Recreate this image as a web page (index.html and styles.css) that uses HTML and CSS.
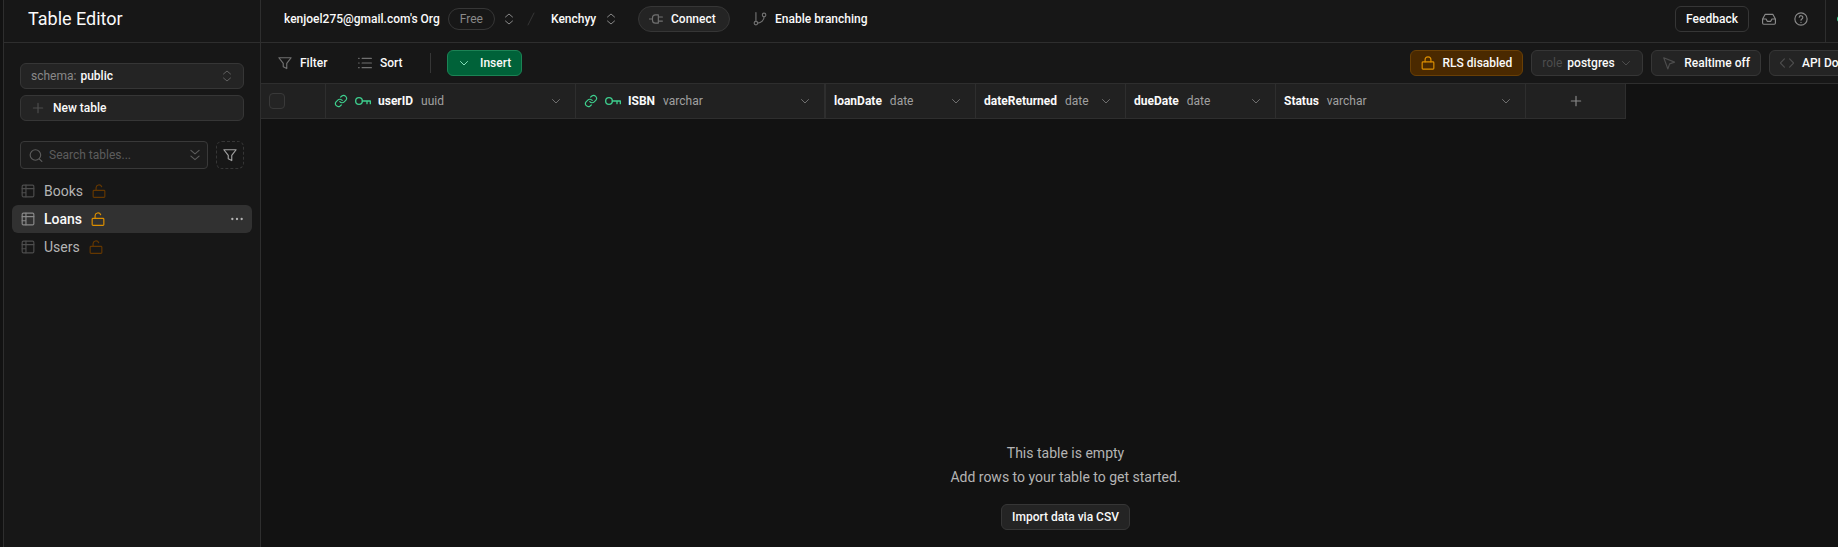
FILE: index.html
```html
<!DOCTYPE html>
<html lang="en">
<head>
<meta charset="utf-8">
<title>Table Editor</title>
<link rel="stylesheet" href="styles.css">
</head>
<body>
<svg class="sprite" aria-hidden="true">
  <symbol id="updown" viewBox="0 0 24 24"><path d="m5 16 7 6 7-6M5 8l7-6 7 6"/></symbol>
  <symbol id="down" viewBox="0 0 24 24"><path d="m5 9 7 7 7-7"/></symbol>
  <symbol id="plus" viewBox="0 0 24 24"><path d="M4 12h16M12 4v16"/></symbol>
  <symbol id="search" viewBox="0 0 24 24"><circle cx="11" cy="12" r="9"/><path d="m18 19 4 4"/></symbol>
  <symbol id="double-down" viewBox="0 0 24 24"><path d="m5 4 7 6 7-6M5 14l7 6 7-6"/></symbol>
  <symbol id="funnel" viewBox="0 0 24 24"><path d="M1.500 3h21l-7.500 9.500v9l-6-3v-6z"/></symbol>
  <symbol id="table" viewBox="0 0 24 24"><rect x="2" y="2" width="20" height="20" rx="2"/><path d="M2 8h20M8.500 2v20M2 15h6"/></symbol>
  <symbol id="unlock" viewBox="0 0 24 24"><rect x="2" y="11" width="20" height="12" rx="1.500"/><path d="M7 11V6.500a5 5 0 0 1 9.500-2"/></symbol>
  <symbol id="lock" viewBox="0 0 24 24"><rect x="2" y="10" width="20" height="12.500" rx="1.500"/><path d="M7 10V6.500a5 5 0 0 1 10 0V10"/></symbol>
  <symbol id="dots" viewBox="0 0 24 24"><circle cx="4" cy="12" r="1"/><circle cx="12" cy="12" r="1"/><circle cx="20" cy="12" r="1"/></symbol>
  <symbol id="plug" viewBox="0 0 24 24"><path d="M0.500 12H6M16 5h-5a5 5 0 0 0-5 5v4a5 5 0 0 0 5 5h5zM16 8.500h7M16 15.500h7"/></symbol>
  <symbol id="branch" viewBox="0 0 24 24"><path d="M5 1v15M8 19a11 11 0 0 0 11-11"/><circle cx="5" cy="19" r="3"/><circle cx="19" cy="5" r="3"/></symbol>
  <symbol id="inbox" viewBox="0 0 24 24"><path d="M23 12h-6l-2 4H9l-2-4H1M5.500 4h13L23 12v7a2 2 0 0 1-2 2H3a2 2 0 0 1-2-2v-7z"/></symbol>
  <symbol id="help" viewBox="0 0 24 24"><circle cx="12" cy="12" r="10.500"/><path d="M9 9a3 3 0 0 1 6 .800c0 2-3 2.500-3 4.200M12 17.500v.500"/></symbol>
  <symbol id="list" viewBox="0 0 24 24"><path d="M7 4h16M7 12h16M7 20h16M1 4h1M1 12h1M1 20h1"/></symbol>
  <symbol id="cursor" viewBox="0 0 24 24"><path d="m3 3 7 19 3-8.500 8.500-3z"/></symbol>
  <symbol id="code" viewBox="0 0 24 24"><path d="m16.500 19 7-7-7-7M7.500 5l-7 7 7 7"/></symbol>
  <symbol id="link" viewBox="0 0 24 24"><path d="M10 13a5 5 0 0 0 7.500.500l3-3a5 5 0 0 0-7-7l-2 1.700M14 11a5 5 0 0 0-7.500-.500l-3 3a5 5 0 0 0 7 7l2-1.700"/></symbol>
  <symbol id="key" viewBox="0 0 24 14"><circle cx="6" cy="7" r="5"/><path d="M11 7h12v4M18 7v4"/></symbol>
</svg>

<div class="app">
  <aside class="sidebar">
    <h1 class="title">Table Editor</h1>
    <div class="controls">
      <button class="btn schema"><span class="muted">schema:</span><span>public</span><svg class="icon small push"><use href="#updown"/></svg></button>
      <button class="btn new-table"><svg class="icon"><use href="#plus"/></svg>New table</button>
    </div>
    <div class="search-row">
      <label class="search">
        <svg class="icon"><use href="#search"/></svg>
        <input type="text" placeholder="Search tables..." aria-label="Search tables">
        <svg class="icon"><use href="#double-down"/></svg>
      </label>
      <button class="filter-btn" aria-label="Filter tables"><svg class="icon"><use href="#funnel"/></svg></button>
    </div>
    <nav class="tables">
      <a class="item" href="#books"><svg class="icon"><use href="#table"/></svg>Books<svg class="icon lock"><use href="#unlock"/></svg></a>
      <a class="item active" href="#loans"><svg class="icon"><use href="#table"/></svg>Loans<svg class="icon lock"><use href="#unlock"/></svg><svg class="icon more"><use href="#dots"/></svg></a>
      <a class="item" href="#users"><svg class="icon"><use href="#table"/></svg>Users<svg class="icon lock"><use href="#unlock"/></svg></a>
    </nav>
  </aside>

  <main class="main">
    <header class="topbar">
      <a class="org" href="#org">kenjoel275@gmail.com's Org</a>
      <span class="badge">Free</span>
      <button class="plain switch" aria-label="Switch organization"><svg class="icon small"><use href="#updown"/></svg></button>
      <svg class="slash" viewBox="0 0 8 14"><path d="M7 1 1 13"/></svg>
      <a class="project" href="#project">Kenchyy</a>
      <button class="plain switch" aria-label="Switch project"><svg class="icon small"><use href="#updown"/></svg></button>
      <button class="btn connect"><svg class="icon"><use href="#plug"/></svg>Connect</button>
      <button class="plain branching"><svg class="icon"><use href="#branch"/></svg>Enable branching</button>
      <div class="top-actions">
        <button class="btn feedback">Feedback</button>
        <button class="plain" aria-label="Inbox"><svg class="icon"><use href="#inbox"/></svg></button>
        <button class="plain" aria-label="Help"><svg class="icon"><use href="#help"/></svg></button>
      </div>
      <div class="top-end"><span class="status"></span></div>
    </header>

    <div class="toolbar">
      <button class="plain filter"><svg class="icon"><use href="#funnel"/></svg>Filter</button>
      <button class="plain sort"><svg class="icon"><use href="#list"/></svg>Sort</button>
      <span class="divider"></span>
      <button class="btn insert"><svg class="icon small"><use href="#down"/></svg>Insert</button>
      <div class="tools">
        <button class="btn rls"><svg class="icon"><use href="#lock"/></svg>RLS disabled</button>
        <button class="btn role"><span class="faint">role</span>postgres<svg class="icon small"><use href="#down"/></svg></button>
        <button class="btn realtime"><svg class="icon"><use href="#cursor"/></svg>Realtime off</button>
        <button class="btn api"><svg class="icon"><use href="#code"/></svg>API Docs</button>
      </div>
    </div>

    <table class="grid">
      <colgroup><col class="c-check"><col class="c-wide"><col class="c-wide"><col class="c-date"><col class="c-date"><col class="c-date"><col class="c-wide"><col class="c-add"></colgroup>
      <thead>
        <tr>
          <th><input class="check" type="checkbox" aria-label="Select all rows"></th>
          <th><div class="cell"><span class="keys"><svg class="icon green"><use href="#link"/></svg><svg class="key green"><use href="#key"/></svg></span>userID<span class="type">uuid</span><svg class="icon small"><use href="#down"/></svg></div></th>
          <th class="frozen"><div class="cell"><span class="keys"><svg class="icon green"><use href="#link"/></svg><svg class="key green"><use href="#key"/></svg></span>ISBN<span class="type">varchar</span><svg class="icon small"><use href="#down"/></svg></div></th>
          <th><div class="cell">loanDate<span class="type">date</span><svg class="icon small"><use href="#down"/></svg></div></th>
          <th><div class="cell">dateReturned<span class="type">date</span><svg class="icon small"><use href="#down"/></svg></div></th>
          <th><div class="cell">dueDate<span class="type">date</span><svg class="icon small"><use href="#down"/></svg></div></th>
          <th><div class="cell">Status<span class="type">varchar</span><svg class="icon small"><use href="#down"/></svg></div></th>
          <th><button class="plain add" aria-label="Add column"><svg class="icon"><use href="#plus"/></svg></button></th>
        </tr>
      </thead>
    </table>

    <section class="empty">
      <p>This table is empty</p>
      <p>Add rows to your table to get started.</p>
      <button class="btn import">Import data via CSV</button>
    </section>
  </main>
</div>
</body>
</html>
```
FILE: styles.css
```css
* { box-sizing: border-box; }

body {
  margin: 0;
  overflow: hidden;
  background: #121212;
  color: #fafafa;
  font: 500 12px/16px Roboto, "Liberation Sans", sans-serif;
}

a { color: inherit; text-decoration: none; }
button, input { font: inherit; color: inherit; }
p, h1 { margin: 0; }

.sprite { position: absolute; width: 0; height: 0; }

.icon, .key, .slash {
  flex: none;
  width: 14px;
  height: 14px;
  fill: none;
  stroke: currentColor;
  stroke-width: 2;
  stroke-linecap: round;
  stroke-linejoin: round;
}
.icon { color: #707070; }
.icon.small { width: 12px; height: 12px; }
.key { width: 16px; height: 10px; }
.icon.green, .key.green { color: #3ecf8e; }

/* The workspace extends past the right edge of the window. */
.app {
  display: flex;
  width: calc(100% + 32px);
  height: 100vh;
}

.btn {
  display: flex;
  align-items: center;
  height: 26px;
  padding: 0 10px;
  border: 1px solid #363636;
  border-radius: 6px;
  background: #242424;
  white-space: nowrap;
}
.plain {
  display: flex;
  align-items: center;
  gap: 8px;
  padding: 0;
  border: 0;
  background: none;
  white-space: nowrap;
}

/* Sidebar */
.sidebar {
  flex: none;
  width: 261px;
  border: solid #2e2e2e;
  border-width: 0 1px;
  background: #171717;
  box-shadow: inset 0 0 0 0 #171717;
}
.app > .sidebar { margin-left: 3px; width: 258px; }
.title {
  height: 43px;
  padding: 9px 24px;
  border-bottom: 1px solid #2e2e2e;
  font-size: 18px;
  line-height: 20px;
  font-weight: 400;
}
.controls {
  display: grid;
  gap: 6px;
  padding: 20px 16px;
}
.schema { gap: 4px; }
.muted { color: #898989; font-weight: 400; }
.push { margin-left: auto; }
.new-table { gap: 8px; }
.new-table .icon { color: #4d4d4d; }
.schema .icon { color: #606060; }
.search-row {
  display: flex;
  gap: 8px;
  padding: 0 16px;
}
.search {
  display: flex;
  flex: 1;
  align-items: center;
  gap: 6px;
  min-width: 0;
  height: 28px;
  padding: 0 5px 0 8px;
  border: 1px solid #393939;
  border-radius: 4px;
  background: #1c1c1c;
}
.search .icon { color: #5c5c5c; }
.search input {
  flex: 1;
  min-width: 0;
  padding: 0;
  border: 0;
  outline: 0;
  background: none;
  font-weight: 400;
}
.search input::placeholder { color: #5c5c5c; }
.filter-btn {
  display: grid;
  place-items: center;
  width: 28px;
  height: 28px;
  padding: 0;
  border: 1px dashed #363636;
  border-radius: 6px;
  background: none;
}
.filter-btn .icon { color: #a0a0a0; }
.tables { padding: 8px; }
.item {
  display: flex;
  align-items: center;
  gap: 9px;
  height: 28px;
  padding: 0 8px 0 9px;
  border-radius: 6px;
  color: #b4b4b4;
  font-size: 14px;
  font-weight: 400;
}
.item .icon { color: #4d4d4d; }
.item .lock { color: #643700; }
.item.active { background: #313131; color: #fafafa; font-weight: 500; }
.item.active .icon { color: #898989; }
.item.active .lock { color: #db8e00; }
.item.active .more { margin-left: auto; color: #b4b4b4; }

/* Top bar */
.main {
  display: flex;
  flex: 1;
  flex-direction: column;
  min-width: 0;
}
.topbar {
  display: flex;
  align-items: center;
  height: 43px;
  padding-left: 23px;
  padding-bottom: 4px;
  border-bottom: 1px solid #2e2e2e;
  background: #171717;
}
.org { min-width: 155px; }
.project { min-width: 46px; }
.badge {
  min-width: 46px;
  margin-left: 8px;
  padding: 2px 11px;
  border: 1px solid #363636;
  border-radius: 11px;
  color: #898989;
  font-weight: 400;
  line-height: 16px;
  text-align: center;
}
.switch { margin-left: 8px; }
.switch .icon { color: #898989; }
.slash { width: 8px; margin: 0 16px 0 12px; color: #363636; stroke-width: 1; }
.connect { min-width: 92px; margin-left: 21px; gap: 8px; border-radius: 13px; }
.branching { margin-left: 23px; }
.top-actions {
  display: flex;
  align-items: center;
  gap: 18px;
  margin-left: auto;
  padding-right: 17px;
}
.top-actions .icon { color: #898989; }
.feedback { min-width: 74px; justify-content: center; margin-right: -5px; background: none; }
.top-end {
  display: flex;
  align-items: center;
  width: 45px;
  height: 42px;
  margin-bottom: -4px;
  padding: 0 0 4px 11px;
  border-left: 1px solid #2e2e2e;
}
.status { width: 6px; height: 6px; border-radius: 3px; background: #3ecf8e; }

/* Table toolbar */
.toolbar {
  display: flex;
  align-items: center;
  height: 41px;
  padding: 0 6px 0 17px;
  border-bottom: 1px solid #2e2e2e;
  background: #171717;
}
.filter { min-width: 52px; }
.sort { min-width: 45px; margin-left: 28px; }
.divider { width: 1px; height: 20px; margin: 0 16px 0 27px; background: #363636; }
.insert { gap: 10px; min-width: 75px; border-color: #1c8355; background: #006239; }
.insert .icon { color: #85e0ba; }
.tools { display: flex; gap: 8px; margin-left: auto; }
.rls { gap: 8px; min-width: 113px; border-color: #693f05; background: #4a2900; }
.rls .icon { color: #db8e00; }
.role { gap: 5px; min-width: 112px; }
.faint, .role .icon, .realtime .icon, .api .icon { color: #4d4d4d; }
.faint { font-weight: 400; }
.realtime, .api { gap: 8px; }
.realtime { min-width: 108px; }
.api { min-width: 95px; }

/* Column headers */
.grid {
  align-self: flex-start;
  width: 1365px;
  border-collapse: separate;
  border-spacing: 0;
  table-layout: fixed;
  background: #212121;
}
.c-check { width: 65px; }
.c-wide { width: 250px; }
.c-date { width: 150px; }
.c-add { width: 100px; }
.grid th {
  height: 35px;
  padding: 0 8px;
  border: solid #2e2e2e;
  border-width: 0 1px 1px 0;
  text-align: left;
  font-weight: 700;
}
.grid .frozen { border-right-width: 2px; }
.cell { display: flex; align-items: center; gap: 8px; }
.cell .icon.small { margin: 0 5px 0 auto; }
.keys { display: flex; align-items: center; gap: 7px; margin-right: -1px; }
.type { color: #a0a0a0; font-weight: 400; }
.check {
  display: block;
  width: 16px;
  height: 16px;
  margin: 0;
  border: 1px solid #393939;
  border-radius: 4px;
  background: #242424;
  appearance: none;
}
.add { margin: 0 auto; }
.add .icon { color: #898989; }

/* Empty state */
.empty {
  display: flex;
  flex: 1;
  flex-direction: column;
  align-items: center;
  justify-content: flex-end;
  padding-bottom: 17px;
  color: #b4b4b4;
  font-size: 14px;
  line-height: 24px;
  font-weight: 400;
}
.import { margin-top: 15px; color: #fafafa; font-size: 12px; font-weight: 500; }
```
